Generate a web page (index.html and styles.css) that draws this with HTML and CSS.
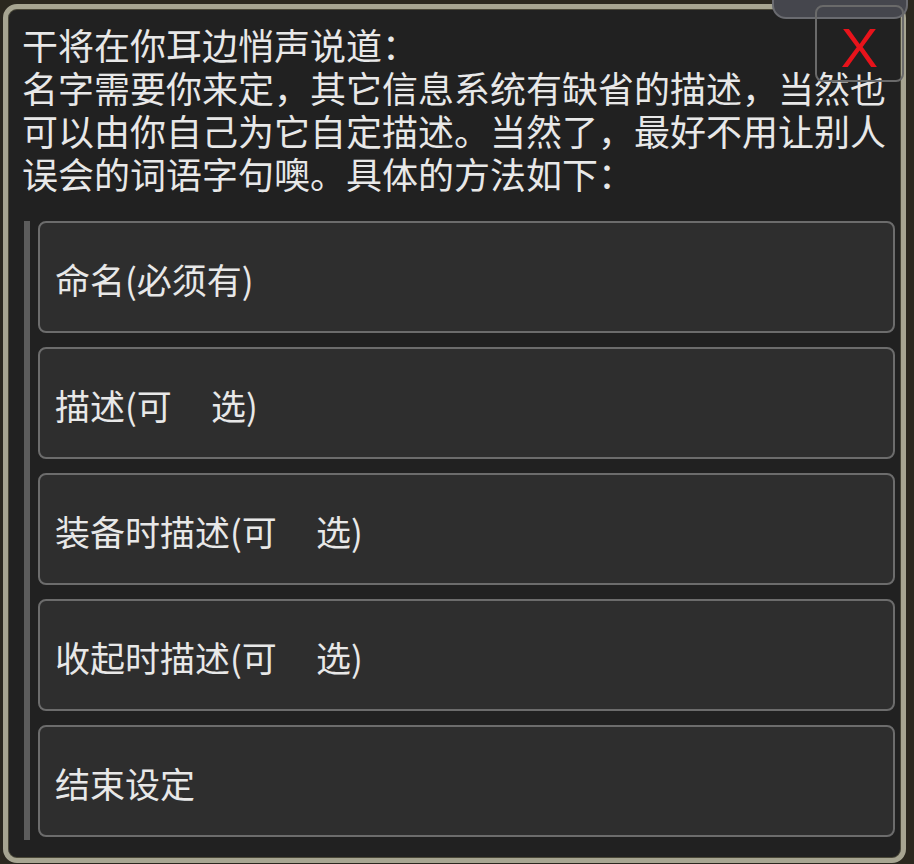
FILE: index.html
```html
<!DOCTYPE html>
<html lang="zh-CN">
  <head>
    <meta charset="UTF-8" />
    <title>干将</title>
    <link rel="stylesheet" href="styles.css">
  </head>
  <body>
    <div class="top-tab"></div>
    <div class="frame">
      <p class="message">干将在你耳边悄声说道：<br>名字需要你来定，其它信息系统有缺省的描述，当然也可以由你自己为它自定描述。当然了，最好不用让别人误会的词语字句噢。具体的方法如下：</p>

      <div class="menu">
        <button class="option">命名(必须有)</button>
        <button class="option">描述(可     选)</button>
        <button class="option">装备时描述(可     选)</button>
        <button class="option">收起时描述(可     选)</button>
        <button class="option">结束设定</button>
      </div>
    </div>
    <button class="close">X</button>
  </body>
</html>
```

FILE: styles.css
```css
body {
  margin: 0;
  background-color: #2b281f;
  font-family: "Noto Sans CJK SC", sans-serif;
  color: #e8e8e8;
  overflow: hidden;
}
.frame {
  box-sizing: border-box;
  margin: 4px 8px 0 3px;
  height: 859px;
  border: 5px solid #a7a591;
  border-radius: 14px;
  background-color: #212121;
  padding: 14px 6px 0 14px;
  box-shadow: inset 0 0 0 1px #4a4838;
}
.message {
  margin: 0;
  font-size: 36px;
  line-height: 43px;
}
.menu {
  margin: 26px 0 0 2px;
  border-left: 6px solid #5c5c5c;
  padding: 0 0 3px 8px;
  display: flex;
  flex-direction: column;
  gap: 14px;
}
.option {
  box-sizing: border-box;
  height: 112px;
  border: 2px solid #6c6c6c;
  border-radius: 8px;
  background-color: #2e2e2e;
  color: #e8e8e8;
  font-family: "Noto Sans CJK SC", sans-serif;
  font-size: 35px;
  text-align: left;
  padding: 2px 15px 0;
  white-space: pre;
}
.close {
  position: absolute;
  left: 815px;
  top: 5px;
  width: 89px;
  height: 77px;
  border: 2px solid #6a6a6a;
  border-radius: 8px;
  background-color: transparent;
  color: #e8131b;
  font-family: "Liberation Sans", sans-serif;
  font-size: 56px;
  line-height: 1;
  padding: 8px 0 0;
}
.top-tab {
  position: absolute;
  left: 772px;
  top: -20px;
  width: 132px;
  height: 35px;
  border: 2px solid #6a6b70;
  border-radius: 14px;
  background-color: #45464d;
}
```
